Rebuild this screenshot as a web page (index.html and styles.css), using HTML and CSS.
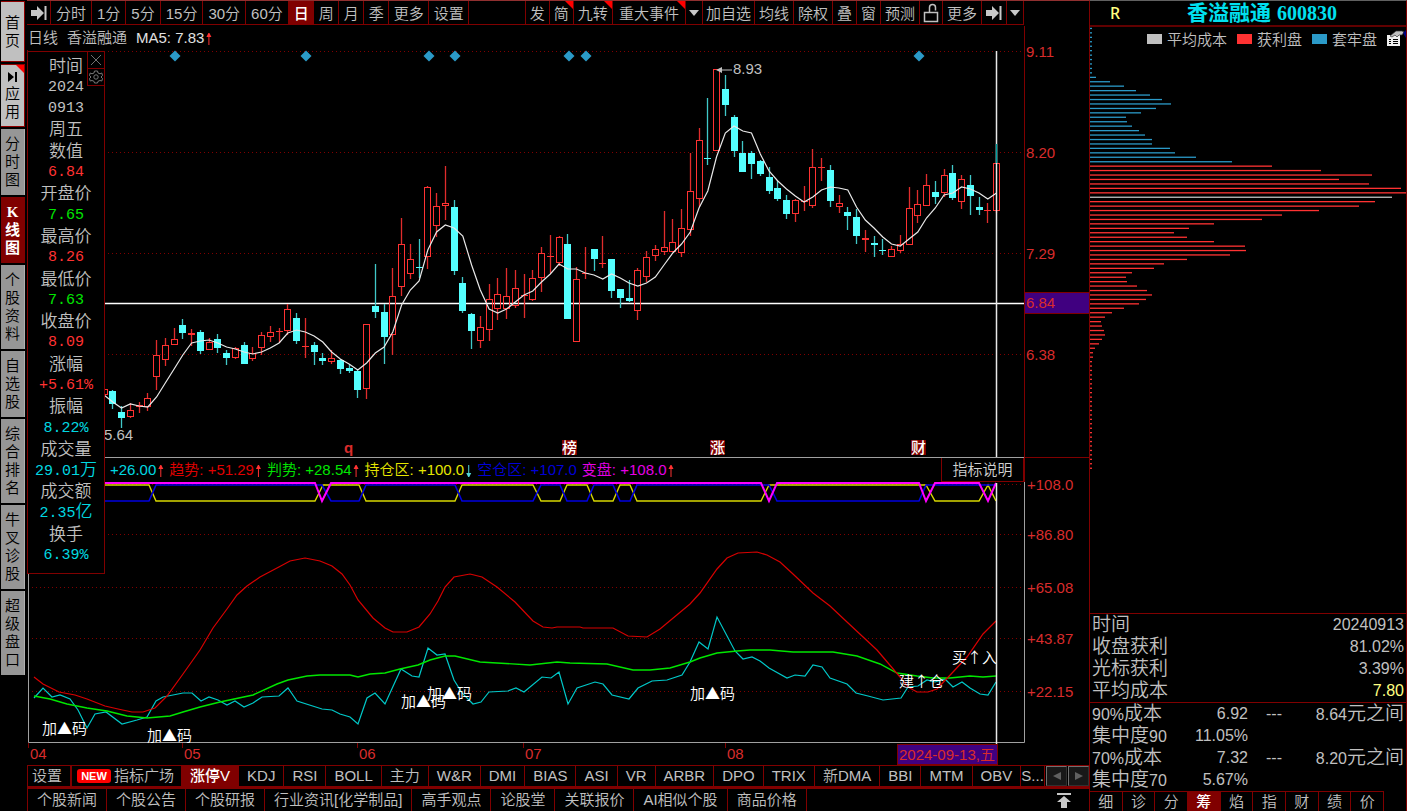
FILE: index.html
```html
<!DOCTYPE html>
<html lang="zh-CN">
  <head>
    <meta charset="UTF-8" />
    <meta name="viewport" content="width=device-width, initial-scale=1.0" />
    <title>香溢融通 600830</title>
    <link rel="stylesheet" href="styles.css">
  </head>
  <body>
    <!-- 左侧导航 -->
    <nav class="side">
      <button class="light home">首页</button>
      <button class="light app">
        <svg width="10" height="12" viewBox="0 0 10 12"><path d="M0 1l6 5-6 5zM7 1h2v10H7z" fill="#000" /></svg>
        <span>应用</span>
      </button>
      <button>分时图</button>
      <button class="now">K线图</button>
      <button>个股资料</button>
      <button>自选股</button>
      <button>综合排名</button>
      <button>牛叉诊股</button>
      <button>超级盘口</button>
    </nav>

    <main class="main">
      <div class="toolbar">
        <div class="group periods">
          <button class="expand" aria-label="展开"><svg width="16" height="14" viewBox="0 0 16 14"><path d="M0 4h6V0l7 7-7 7v-4H0zM13.500 0h2v14h-2z" fill="#c8c8c8" /></svg></button>
          <button>分时</button>
          <button>1分</button>
          <button>5分</button>
          <button>15分</button>
          <button>30分</button>
          <button>60分</button>
          <button class="now">日</button>
          <button>周</button>
          <button>月</button>
          <button>季</button>
          <button>更多</button>
          <button>设置</button>
        </div>
        <div class="group tools">
          <button>发</button>
          <button class="hot">简</button>
          <button class="hot">九转</button>
          <button class="hot wide">重大事件</button>
          <button class="narrow" aria-label="事件菜单"><svg width="10" height="6" viewBox="0 0 10 6"><path d="M0 0h10L5 6z" fill="#c8c8c8" /></svg></button>
          <button class="narrow">加自选</button>
          <button>均线</button>
          <button>除权</button>
          <button>叠</button>
          <button>窗</button>
          <button>预测</button>
          <button class="narrow" aria-label="锁定"><svg width="16" height="20" viewBox="0 0 16 20"><path d="M1.500 9.500h13v9h-13zM6.500 9.500v-5q0-3 3-3t3 3v3" fill="none" stroke="#c0c0c0" stroke-width="1.500" /></svg></button>
          <button>更多</button>
          <button aria-label="最右"><svg width="16" height="14" viewBox="0 0 16 14"><path d="M0 4h6V0l7 7-7 7v-4H0zM13.500 0h2v14h-2z" fill="#c8c8c8" /></svg></button>
          <button class="narrow" aria-label="更多菜单"><svg width="10" height="6" viewBox="0 0 10 6"><path d="M0 0h10L5 6z" fill="#c8c8c8" /></svg></button>
        </div>
      </div>

      <div class="charts">
        <div class="chart-title">
          <span>日线</span>
          <span>香溢融通</span>
          <span class="ma">MA5: 7.83<i class="up"></i></span>
        </div>
        <svg class="kline" id="kline" viewBox="27 50 1062 408"></svg>
        <div class="legend">
          <span class="cyan">+26.00<i class="up"></i></span>
          <span class="red">趋势: +51.29<i class="up"></i></span>
          <span class="green">判势: +28.54<i class="up"></i></span>
          <span class="yellow">持仓区: +100.0<i class="down"></i></span>
          <span class="blue">空仓区: +107.0</span>
          <span class="pink">变盘: +108.0<i class="up"></i></span>
          <button>指标说明</button>
        </div>
        <svg class="trend" id="trend" viewBox="27 482 1062 283"></svg>

        <!-- 十字光标数据 -->
        <div class="data-box">
          <div class="tools-box">
            <button aria-label="关闭"><svg width="14" height="14" viewBox="0 0 14 14"><path d="M2 2l10 10M12 2L2 12" stroke="#707070" /></svg></button>
            <button aria-label="设置"><svg width="14" height="14" viewBox="0 0 14 14"><path d="M5.500 1h3l.5 2 2 .8 1.800-.8 .7 2.500-1.500 1.500 1.500 1.500-.7 2.500-1.800-.5-2 .8-.5 1.700h-3L5 11.300l-2-.8-1.800.5-.7-2.500L2 7 .5 5.500 1.200 3l1.800.8 2-.8z" fill="none" stroke="#787878" /><circle cx="7" cy="7" r="2.200" fill="none" stroke="#787878" /></svg></button>
          </div>
          <dl>
            <dt>时间</dt><dd>2024</dd><dd>0913</dd><dd class="cn">周五</dd>
            <dt>数值</dt><dd class="red">6.84</dd>
            <dt>开盘价</dt><dd class="green">7.65</dd>
            <dt>最高价</dt><dd class="red">8.26</dd>
            <dt>最低价</dt><dd class="green">7.63</dd>
            <dt>收盘价</dt><dd class="red">8.09</dd>
            <dt>涨幅</dt><dd class="red">+5.61%</dd>
            <dt>振幅</dt><dd class="cyan">8.22%</dd>
            <dt>成交量</dt><dd class="cyan">29.01<b>万</b></dd>
            <dt>成交额</dt><dd class="cyan">2.35<b>亿</b></dd>
            <dt>换手</dt><dd class="cyan">6.39%</dd>
          </dl>
        </div>
      </div>

      <div class="tabs">
        <button class="set">设置</button>
        <button class="market"><em>NEW</em>指标广场</button>
        <button class="now">涨停V</button>
        <button>KDJ</button>
        <button>RSI</button>
        <button>BOLL</button>
        <button>主力</button>
        <button>W&amp;R</button>
        <button>DMI</button>
        <button>BIAS</button>
        <button>ASI</button>
        <button>VR</button>
        <button>ARBR</button>
        <button>DPO</button>
        <button>TRIX</button>
        <button>新DMA</button>
        <button>BBI</button>
        <button>MTM</button>
        <button>OBV</button>
        <button class="rest">S...</button>
        <button class="page" aria-label="上一页"><svg width="8" height="8" viewBox="0 0 8 8"><path d="M8 0v8L0 4z" fill="#606060" /></svg></button>
        <button class="page" aria-label="下一页"><svg width="8" height="8" viewBox="0 0 8 8"><path d="M0 0v8l8-4z" fill="#606060" /></svg></button>
      </div>
      <div class="news">
        <button>个股新闻</button>
        <button>个股公告</button>
        <button>个股研报</button>
        <button>行业资讯[化学制品]</button>
        <button>高手观点</button>
        <button>论股堂</button>
        <button>关联报价</button>
        <button>AI相似个股</button>
        <button>商品价格</button>
        <button class="top" aria-label="展开"><svg width="14" height="15" viewBox="0 0 14 15"><path d="M0 0h14v2H0zM7 3l7 6h-4v6H4V9H0z" fill="#c8c8c8" /></svg></button>
      </div>
    </main>

    <aside class="cost">
      <h1><span class="r">R</span><span class="name">香溢融通</span><span class="code">600830</span></h1>
      <div class="cost-chart">
        <svg id="cost" viewBox="1090 27 316 586"></svg>
        <ul class="cost-legend">
          <li><i class="avg"></i>平均成本</li>
          <li><i class="win"></i>获利盘</li>
          <li><i class="lose"></i>套牢盘</li>
          <li>
            <svg width="19" height="17" viewBox="0 0 19 17">
              <path d="M0 5h13v11H0z" fill="#f0f0f0" />
              <path d="M2 9.500h2M6 9.500h5M2 11.500h2M6 11.500h5M2 13.500h2M6 13.500h5" stroke="#000" />
              <path d="M3 6l6-5h6l2 1-2 3h-3l-2 2-2-2-3 2z" fill="#c0c0c0" stroke="#333" stroke-width=".7" />
              <path d="M16 3l3-3v8z" fill="#000080" />
            </svg>
          </li>
        </ul>
      </div>
      <table class="stat">
        <tr><th>时间</th><td>20240913</td></tr>
        <tr><th>收盘获利</th><td>81.02%</td></tr>
        <tr><th>光标获利</th><td>3.39%</td></tr>
        <tr><th>平均成本</th><td class="avg-cost">7.80</td></tr>
      </table>
      <table class="stat range">
        <tr><th><span>90%</span>成本</th><td>6.92</td><td class="dash">---</td><td>8.64<b>元之间</b></td></tr>
        <tr><th>集中度<span>90</span></th><td>11.05%</td><td></td><td></td></tr>
        <tr><th><span>70%</span>成本</th><td>7.32</td><td class="dash">---</td><td>8.20<b>元之间</b></td></tr>
        <tr><th>集中度<span>70</span></th><td>5.67%</td><td></td><td></td></tr>
      </table>
      <div class="cost-tabs">
        <button>细</button>
        <button>诊</button>
        <button>分</button>
        <button class="now">筹</button>
        <button>焰</button>
        <button>指</button>
        <button>财</button>
        <button>绩</button>
        <button>价</button>
      </div>
    </aside>
    <script src="chart.js"></script>
  </body>
</html>
```

FILE: styles.css
```css
* {
  margin: 0;
  padding: 0;
  box-sizing: border-box;
  list-style: none;
}
body {
  display: grid;
  grid-template-columns: 27px 1fr 318px;
  align-items: start;
  min-height: 100vh;
  background-color: #000;
  color: #c0c0c0;
  font-family: "Liberation Sans", "Noto Sans CJK SC", sans-serif;
  font-size: 15px;
  font-weight: 350;
}
button {
  border: 0;
  background: none;
  color: inherit;
  font: inherit;
  white-space: nowrap;
  cursor: pointer;
}
svg {
  display: block;
}
i,
em,
b {
  font-style: normal;
  font-weight: inherit;
}
.red { color: #ff3232; }
.green { color: #00e600; }
.cyan { color: #00d8e0; }
.yellow { color: #e6e600; }
.blue { color: #0000d8; }
.pink { color: #e600e6; }
.legend .red { color: #e00000; }

/* 左侧导航 */
.side {
  display: flex;
  flex-direction: column;
  gap: 2px;
  padding: 1px 2px 0 1px;
}
.side button {
  padding: 6px 4px;
  background-color: #969696;
  border-right: 1px solid #b0b0b0;
  color: #000;
  line-height: 18px;
  white-space: normal;
  word-break: break-all;
}
.side .light {
  background-color: #c0c0c0;
  border: 1px solid #900000;
  border-left: 0;
}
.side .home {
  height: 61px;
}
.side .app {
  position: relative;
  height: 63px;
}
.side .app svg {
  margin: 0 auto 2px;
}
.side .app::after,
.hot::after {
  content: "";
  position: absolute;
  top: 0;
  right: 0;
  border-top: 8px solid #ff0000;
  border-left: 8px solid transparent;
}
.side .now {
  background-color: #800000;
  border-color: #800000;
  color: #fff;
  font-family: "Liberation Serif", "Noto Sans CJK SC", serif;
  font-weight: 700;
}

/* 顶部工具栏 */
.main {
  border-top: 1px solid #903030;
}
.toolbar {
  display: flex;
  justify-content: space-between;
  height: 24px;
  margin-right: 65px;
  border-bottom: 1px solid #800000;
}
.group {
  display: flex;
}
.group button {
  position: relative;
  display: flex;
  align-items: center;
  justify-content: center;
  padding: 0 4px;
  border-right: 1px solid #800000;
}
.periods button {
  padding: 0 5px;
}
.periods .now,
.periods .now ~ button {
  padding: 0 4px 0 5px;
}
.periods .expand {
  padding: 0 3px 0 4px;
}
.tools {
  border-left: 1px solid #800000;
}
.tools .wide {
  padding: 0 6px;
}
.tools .narrow {
  padding: 0 3px;
}
.now {
  background-color: #800000;
  color: #fff;
  font-weight: 500;
}

/* 图表 */
.charts {
  position: relative;
}
.chart-title {
  display: flex;
  gap: 9px;
  height: 25px;
  padding-left: 1px;
  line-height: 25px;
}
.ma {
  color: #e0e0e0;
}
.kline,
.trend {
  width: 100%;
  height: auto;
  overflow: visible;
  font-size: 15px;
}
.legend {
  display: flex;
  gap: 5px;
  height: 24px;
  padding: 0 65px 0 83px;
  line-height: 24px;
}
.legend span,
.ma {
  white-space: nowrap;
}
.legend button {
  width: 83px;
  margin-left: auto;
  border: 1px solid #800000;
  border-top: 0;
  color: #d0d0d0;
}
.up,
.down {
  display: inline-block;
  width: 7px;
  height: 12px;
  margin-left: 1px;
  vertical-align: -2px;
  background-color: #ff3232;
  clip-path: polygon(3px 0, 4px 0, 6px 4px, 4px 4px, 4px 12px, 3px 12px, 3px 4px, 1px 4px);
}
.down {
  background-color: #54d8d8;
  clip-path: polygon(3px 0, 4px 0, 4px 8px, 6px 8px, 4px 12px, 3px 12px, 1px 8px, 3px 8px);
}
.data-box {
  position: absolute;
  left: 0;
  top: 26px;
  width: 78px;
  height: 523px;
  padding: 4px 0 6px;
  background-color: #000;
  border: 1px solid #800000;
}
.data-box dl {
  display: grid;
  grid-auto-rows: 1fr;
  height: 100%;
  align-items: center;
  text-align: center;
  font-size: 17px;
  line-height: 20px;
}
.data-box dd {
  font-family: "Liberation Mono", "Noto Sans CJK SC", monospace;
  font-size: 15px;
  font-weight: 400;
}
.data-box .cn,
.data-box b {
  font-size: 17px;
  font-weight: 350;
}
.tools-box {
  position: absolute;
  right: 0;
  top: 0;
  border-left: 1px solid #800000;
}
.tools-box button {
  display: block;
  height: 17px;
  padding: 0 1px;
  border-bottom: 1px solid #800000;
}

/* 底部标签 */
.tabs,
.news {
  display: flex;
}
.tabs {
  height: 24px;
  border-top: 1px solid #800000;
  border-bottom: 3px solid #800000;
  border-left: 1px solid #800000;
}
.tabs button {
  padding: 0 8px;
  border-right: 1px solid #800000;
  line-height: 20px;
}
.tabs .set {
  padding: 0 8px 0 4px;
  border-right-width: 2px;
}
.tabs .market {
  padding: 0 7px 0 5px;
}
.tabs em {
  display: inline-block;
  width: 34px;
  height: 14px;
  margin-right: 3px;
  border-radius: 3px;
  background-color: #ff0000;
  color: #fff;
  font-size: 11px;
  font-weight: 700;
  line-height: 14px;
  vertical-align: 1px;
}
.tabs .rest {
  flex: 1;
  padding: 0;
}
.tabs .page {
  width: 21px;
  margin-left: 1px;
  padding: 0 6px;
  border: 1px solid #707070;
  border-right-color: #303030;
  border-bottom-color: #303030;
  background-color: #181818;
}
.news {
  height: 22px;
  border-left: 1px solid #800000;
}
.news button {
  padding: 0 9px;
  border-right: 1px solid #800000;
  line-height: 22px;
}
.news .top {
  margin-left: auto;
  padding: 0 18px;
  border: 0;
}

/* 筹码分布 */
.cost {
  border: 1px solid #800000;
  border-top-color: #606060;
  border-bottom: 0;
}
.cost h1 {
  display: flex;
  height: 26px;
  padding-left: 20px;
  border-bottom: 2px solid #600000;
  color: #00e0f0;
  font-family: "Liberation Serif", "Noto Sans CJK SC", serif;
  font-size: 20px;
  line-height: 24px;
}
.cost .r {
  width: 77px;
  color: #ffff80;
  font-family: "Noto Sans", sans-serif;
  font-size: 16px;
  font-weight: 500;
}
.cost .name {
  margin-right: 6px;
  font-size: 21px;
}
.cost-chart {
  position: relative;
}
.cost-chart > svg {
  width: 100%;
  height: auto;
}
.cost-legend {
  position: absolute;
  top: 2px;
  right: 0;
  display: flex;
  gap: 10px;
}
.cost-legend li {
  display: flex;
  align-items: center;
  gap: 5px;
  height: 19px;
}
.cost-legend i {
  width: 15px;
  height: 10px;
}
.avg { background-color: #c0c0c0; }
.win { background-color: #ff3232; }
.lose { background-color: #2b9ac8; }
.stat {
  width: 100%;
  padding: 0 2px;
  border-top: 1px solid #800000;
  border-spacing: 0;
}
.stat th {
  height: 22px;
  text-align: left;
  font-size: 19px;
  font-weight: inherit;
  line-height: 20px;
}
.stat td {
  text-align: right;
  font-size: 16px;
  line-height: 20px;
}
.stat th span {
  font-size: 16px;
}
.stat b {
  font-size: 19px;
}
.stat .avg-cost {
  color: #ffff80;
}
.range th {
  width: 80px;
}
.range td:nth-child(2) {
  width: 76px;
}
.stat .dash {
  width: 34px;
}
.cost-tabs {
  display: grid;
  grid-template-columns: repeat(9, 1fr);
  margin-right: 22px;
  border-top: 1px solid #800000;
}
.cost-tabs button {
  height: 19px;
  border-right: 1px solid #800000;
  line-height: 19px;
}

/* svg */
.grid { stroke: #800000; stroke-dasharray: 1 3; }
.axis { fill: #d82c2c; }
.white { fill: #fff; }
.line { fill: none; }
.tip { font-family: "Noto Sans CJK SC", sans-serif; }
```

FILE: chart.js
```javascript
var START = 112.8; // 第一根K线的x
var STEP = 8.75;

// 颜色(r涨 c跌), 最高, 实体上, 实体下, 最低
var candles = [
  'c 390 391 404 409', 'c 406 412 418 428', 'r 403 410 417 418', 'r 402 405 407 413', 'r 393 398 407 411',
  'r 340 355 377 390', 'r 338 345 360 366', 'r 328 339 345 345', 'c 319 325 333 339', 'r 329 333 335 346',
  'c 330 332 351 354', 'r 338 342 350 350', 'c 334 339 348 353', 'c 350 353 358 365', 'r 347 348 358 359',
  'c 342 345 364 364', 'r 347 353 359 361', 'r 332 335 348 355', 'r 326 332 337 342', 'r 328 331 332 343',
  'r 304 309 331 335', 'c 313 318 341 344', 'r 318 346 347 358', 'c 342 345 352 365', 'c 353 358 361 365',
  'r 350 358 362 364', 'c 359 360 369 374', 'c 364 368 371 373', 'c 370 371 390 398', 'r 324 324 389 399',
  'c 264 306 312 318', 'c 304 312 337 364', 'r 268 296 335 355', 'r 218 244 287 296', 'r 244 259 274 279',
  'c 239 267 268 278', 'r 186 187 257 269', 'r 193 206 226 237', 'r 166 203 206 220', 'c 200 207 271 275',
  'c 277 283 311 313', 'c 313 314 331 349', 'r 316 327 341 348', 'r 284 299 330 341', 'r 278 294 309 320',
  'r 268 296 309 319', 'r 270 288 306 308', 'r 274 295 296 318', 'r 270 278 300 301', 'r 247 253 278 292',
  'r 235 256 257 273', 'r 236 237 263 266', 'c 234 244 319 319', 'r 267 279 342 342', 'r 247 273 273 279',
  'c 249 249 259 271', 'r 236 263 264 268', 'c 259 259 291 298', 'c 289 289 298 308', 'c 280 298 301 302',
  'r 268 270 311 320', 'r 251 257 277 282', 'r 245 249 256 261', 'r 211 247 252 255', 'r 219 242 252 252',
  'r 209 228 253 257', 'r 153 191 230 236', 'r 128 140 199 207', 'c 98 158 159 165', 'r 69 69 151 151',
  'c 75 89 105 116', 'c 115 117 151 157', 'c 141 153 172 172', 'c 151 153 164 179', 'c 160 161 174 176',
  'c 167 177 191 194', 'c 180 188 199 201', 'c 195 200 214 219', 'r 199 200 214 222', 'r 186 201 201 211',
  'r 149 167 206 208', 'r 158 167 168 181', 'c 165 170 201 207', 'r 195 203 207 213', 'c 207 212 216 230',
  'c 209 217 236 244', 'r 230 238 240 252', 'c 236 243 245 257', 'c 239 250 251 255', 'r 246 249 257 257',
  'r 235 244 251 253', 'r 187 208 245 245', 'r 190 204 216 223', 'r 174 185 206 206', 'c 181 192 197 204',
  'r 169 175 193 197', 'c 165 173 198 200', 'r 175 179 202 209', 'c 175 185 196 215', 'c 197 207 210 215',
  'r 203 210 211 223', 'r 144 163 211 213'
];

var ma5 = [
  395, 402, 408, 404, 406, 407, 397, 383, 369, 355, 343, 341, 340, 343, 347, 349, 352, 354, 352, 348,
  343, 333, 330, 332, 336, 342, 352, 359, 364, 370, 363, 353, 347, 332, 305, 290, 281, 250, 232, 225,
  228, 236, 265, 290, 309, 313, 309, 302, 295, 291, 282, 274, 264, 269, 269, 273, 275, 279, 274, 278,
  283, 286, 283, 277, 265, 253, 244, 232, 208, 191, 157, 133, 126, 131, 133, 154, 171, 181, 189, 196,
  202, 197, 190, 187, 188, 190, 207, 220, 228, 237, 244, 246, 239, 232, 218, 208, 195, 193, 187, 189,
  193, 199, 193
];

function line(x1, y1, x2, y2, color, width) {
  return '<line x1="' + x1 + '" y1="' + y1 + '" x2="' + x2 + '" y2="' + y2 + '" stroke="' + color + '" stroke-width="' + (width || 1) + '"/>';
}
function rect(x, y, w, h, fill, stroke) {
  return '<rect x="' + x + '" y="' + y + '" width="' + w + '" height="' + h + '" fill="' + fill + '" stroke="' + (stroke || 'none') + '"/>';
}
function text(x, y, str, cls, attr) {
  return '<text x="' + x + '" y="' + y + '" class="' + cls + '" ' + (attr || '') + '>' + str + '</text>';
}
function poly(points, color, width) {
  return '<polyline class="line" points="' + points + '" stroke="' + color + '" stroke-width="' + (width || 1) + '"/>';
}
function grid(y) {
  return '<line class="grid" x1="28" y1="' + y + '" x2="1024" y2="' + y + '"/>';
}

/* K线图 */
function drawKline() {
  var html = '';
  [[51.5, '9.11'], [152.5, '8.20'], [253.5, '7.29'], [354.5, '6.38']].forEach(function(g) {
    html += grid(g[0]) + text(1026, g[0] + 5, g[1], 'axis');
  });
  html += line(27.5, 50, 27.5, 458, '#800000');
  html += line(1024.5, 26, 1024.5, 482, '#800000');
  html += line(104, 303.5, 1024, 303.5, '#fff', 1.5);

  html += rect(101.5, 389.5, 6, 5, '#000', '#ff3232');
  candles.forEach(function(item, i) {
    var c = item.split(' ');
    var x = Math.floor(START + STEP * i) + .5;
    var high = +c[1], top = +c[2], bottom = +c[3], low = +c[4];
    var color = c[0] == 'r' ? '#ff3232' : '#54ffff';
    var wick = c[0] == 'r' ? '#e02c2c' : '#40c8c8';
    html += line(x, high, x, top, wick, 1.3) + line(x, bottom, x, low, wick, 1.3);
    if (bottom - top < 3) {
      html += rect(x - 3.5, top, 7, Math.max(bottom - top, 1), color);
    } else if (c[0] == 'r') {
      html += rect(x - 3, top + .5, 6, bottom - top - 1, 'none', color);
    } else {
      html += rect(x - 3.5, top, 7, bottom - top, color);
    }
  });
  html += poly(ma5.map(function(y, i) {
    return (START + STEP * (i - 1)).toFixed(1) + ',' + y;
  }).join(' '), '#e8e8e8', 1.2);

  // 公告标记
  [175, 306, 429, 455, 569, 586, 919].forEach(function(x) {
    html += '<path d="M' + x + ' 50.500l5.500 5.500-5.500 5.500-5.500-5.500z" fill="#2b9ac8"/>';
  });
  html += '<path d="M716 70l6-3v6z" fill="#c0c0c0"/>' + line(718, 70, 732, 70, '#c0c0c0');
  html += text(733, 74, '8.93', '', 'fill="#c0c0c0"') + text(104, 440, '5.64', '', 'fill="#c0c0c0"');
  html += text(344, 453, 'q', 'axis', 'font-weight="700"');
  [[562, '榜'], [710, '涨'], [911, '财']].forEach(function(b) {
    html += rect(b[0], 440, 15, 15, '#800000') + text(b[0], 453, b[1], 'white', 'font-weight="500"');
  });

  // 十字光标
  html += line(996.5, 51, 996.5, 458, '#e8e8e8', 1.5) + line(996.5, 144, 996.5, 163, '#00a0a0', 1.5);
  html += rect(1024.5, 292.5, 65, 21, '#400080', '#800000') + text(1026, 308, '6.84', 'axis');
  html += line(27, 457.5, 1024, 457.5, '#a0a0a0') + line(1024, 457.5, 1089, 457.5, '#800000');
  document.querySelector('#kline').innerHTML = html;
}

/* 指标图 */
function drawTrend() {
  var html = '';
  [[484.5, '+108.0'], [534.5, '+86.80'], [587.5, '+65.08'], [638.5, '+43.87'], [691.5, '+22.15']].forEach(function(g) {
    html += grid(g[0]) + text(1027, g[0] + 5, g[1], 'axis');
  });
  html += '<path class="line" d="M28.500 482V742.500H1024.500V482" stroke="#a0a0a0"/>';

  html += poly('104,485 149,485 156,501 315,501 323,485 359,485 366,501 455,501 462,485 533,485 541,501 560,501 567,485 587,485 594,501 613,501 620,485 630,485 637,501 761,501 769,485 926,485 935,501 979,501 988,485 996,501', '#d8d800', 1.4);
  html += poly('104,501 149,501 156,485 322,485 331,501 359,501 366,485 455,485 462,501 533,501 541,485 560,485 567,501 587,501 594,485 613,485 620,501 630,501 637,485 769,485 777,501 919,501 926,485 996,485', '#0000e0', 1.6);
  html += poly('104,483 315,483 322,501 331,483 761,483 769,501 777,483 919,483 926,501 935,483 979,483 988,501 996,483', '#ff00ff', 2);

  html += poly('34,698 43,688 52,697 60,695 70,699 78,710 87,728 95,714 106,712 122,724 137,720 147,717 156,701 163,697 183,693 192,693 201,701 209,697 218,700 227,705 235,701 244,707 253,703 262,697 279,696 288,688 297,701 322,709 332,710 340,714 350,717 358,724 367,698 375,693 385,704 401,669 412,676 419,677 428,648 437,655 445,654 454,680 462,693 473,704 481,702 489,692 508,691 516,688 524,692 542,677 551,678 559,672 568,704 577,688 595,682 603,684 612,695 629,699 638,688 652,681 667,680 682,675 690,662 699,642 708,649 717,617 735,651 743,659 752,657 760,661 769,668 787,678 795,675 805,676 813,665 822,667 830,678 847,684 856,693 868,696 883,700 901,698 908,687 918,686 927,680 935,682 945,679 953,687 962,682 970,688 980,694 988,695 996,682', '#00c8c8', 1.2);
  html += poly('34,696 50,699 67,704 87,708 107,711 127,716 147,718 170,716 183,712 200,707 220,702 253,695 277,684 288,680 307,676 320,675 350,675 358,677 370,674 385,673 400,669 418,665 430,660 445,656 455,656 480,662 497,663 530,665 557,662 570,663 607,664 633,670 650,670 670,668 690,662 700,658 717,653 737,651 750,650 770,650 793,652 833,652 857,656 880,664 897,673 917,676 933,678 950,678 970,676 983,677 996,676', '#00e600', 1.4);
  html += poly('34,677 43,684 59,692 75,695 87,699 105,706 118,709 132,712 143,712 155,708 167,696 183,674 200,650 213,628 227,609 237,595 247,586 260,577 277,568 290,561 305,558 320,561 332,566 342,574 350,585 358,600 373,618 385,628 393,632 407,632 419,627 430,614 438,601 445,587 454,577 470,574 482,577 497,587 515,602 533,621 543,627 552,628 557,627 580,627 583,628 613,628 628,636 647,637 660,629 678,614 690,604 700,593 717,569 727,558 738,553 757,552 767,555 780,562 793,574 813,593 830,606 847,622 877,650 900,677 908,687 917,692 928,692 937,689 953,672 967,657 983,634 996,621', '#d80000', 1.2);

  // 买卖提示
  [[42, 734, '加▲码'], [147, 741, '加▲码'], [401, 707, '加▲码'], [427, 699, '加▲码'], [690, 699, '加▲码'], [952, 663, '买↑入'], [899, 687, '建↑仓']].forEach(function(t) {
    html += text(t[0], t[1], t[2], 'white tip');
  });

  // 日期
  [[30, '04'], [184, '05'], [359, '06'], [525, '07'], [727, '08']].forEach(function(d) {
    html += line(d[0] - 1.5, 743, d[0] - 1.5, 748, '#800000') + text(d[0], 759, d[1], 'axis');
  });
  html += line(996.5, 483, 996.5, 744, '#e8e8e8', 1.5);
  html += rect(897.5, 744.5, 100, 20, '#400080', '#800000') + text(899, 760, '2024-09-13,五', 'axis');
  document.querySelector('#trend').innerHTML = html;
}

/* 筹码分布 */
function drawCost() {
  var widths = [
    1, 1, 1, 1, 1, 1, 1, 1, 1, 1, 1, 5, 19, 33, 45, 59, 71, 80, 65, 50, 35, 36, 41, 48, 54, 61, 61, 79, 84, 105, 141,
    181, 230, 281, 248, 278, 310, 316, 301, 284, 268, 228, 191, 171, 123, 98, 83, 96, 123, 154, 155, 139, 96, 73,
    63, 41, 35, 36, 46, 56, 61, 55, 48, 33, 21, 14, 10, 11, 13, 14, 11, 8, 4, 2, 2
  ];
  // 底部零散筹码
  for (var n = 0; n < 25; n++) {
    widths.push(1);
  }
  var html = '';
  widths.forEach(function(w, i) {
    var color = i < 31 ? '#2b9ac8' : i == 38 ? '#c0c0c0' : '#ff3232';
    html += rect(1090, (27.8 + 4.442 * i).toFixed(1), w + 1, 1.3, color);
  });
  document.querySelector('#cost').innerHTML = html;
}

drawKline();
drawTrend();
drawCost();
```
